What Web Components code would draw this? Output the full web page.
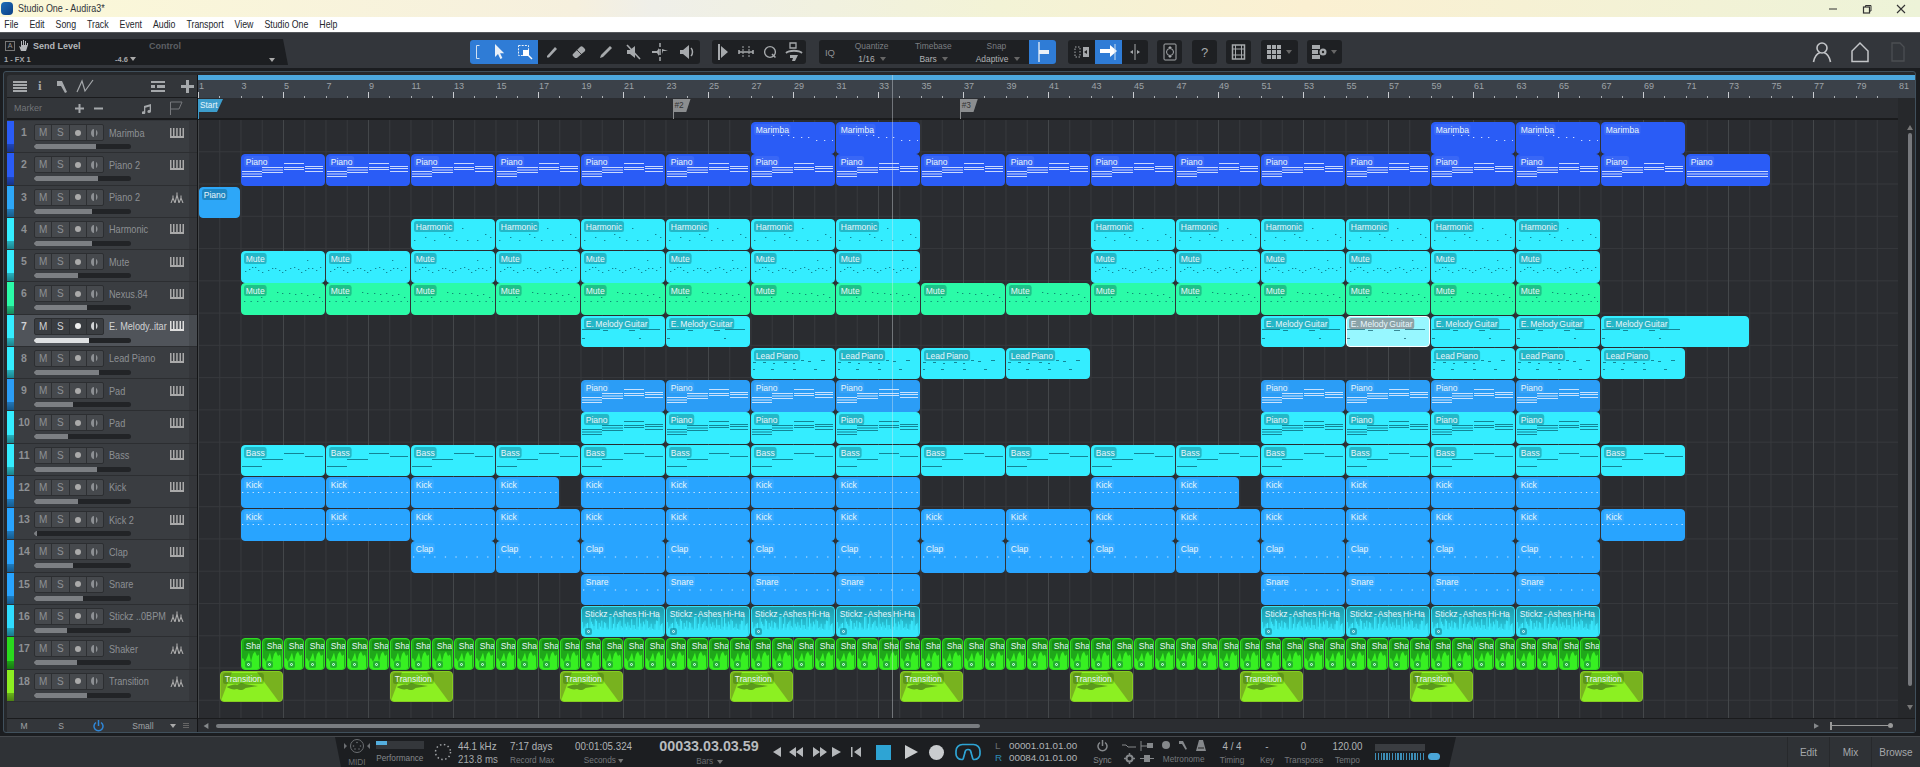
<!DOCTYPE html>
<html lang="en">
<head>
<meta charset="utf-8">
<title>Studio One - Audira3*</title>
<style>
  html, body { margin: 0; background: #2b2e33; overflow: hidden; }
  body { font-family: "Liberation Sans", Arial, sans-serif; }
</style>
</head>
<body>
<s1-window></s1-window>
<script>
// iconos de la interfaz, todos en svg con currentColor
const ic = (w, h, body, extra = "") => `<svg width="${w}" height="${h}" viewBox="0 0 ${w} ${h}" fill="currentColor" ${extra} style="display:block">${body}</svg>`;
const ICONOS = {
  arrow: ic(14, 18, `<path d="M3 1v13l3-3 2.4 5 2-1-2.3-4.8h4.1z"/>`),
  select: ic(16, 16, `<rect x="1.500" y="1.500" width="10" height="10" fill="none" stroke="currentColor" stroke-dasharray="2 1.200"/><rect x="6" y="6" width="6" height="6" fill="#fff"/><path d="M11 11l4 4" stroke="#fff" stroke-width="1.400"/>`),
  pencil: ic(16, 16, `<path d="M3 12L11 3l2 2-8 8.500H3z"/>`),
  eraser: ic(16, 16, `<path d="M2 10l7-7c1-1 2-1 3 0l1.500 1.500c1 1 1 2 0 3l-7 6c-1 .8-2 .8-3 0L2 12c-.6-.6-.6-1.400 0-2z"/><path d="M6 6l5 5" stroke="#222" stroke-width=".8"/>`),
  line: ic(16, 16, `<path d="M2 14l1-3 9-9 2 2-9 9z"/>`),
  mute: ic(16, 16, `<path d="M2 6h3l5-4v12l-5-4H2z"/><path d="M2 1l13 14" stroke="currentColor" stroke-width="1.600"/>`),
  split: ic(16, 18, `<path d="M8 0v4M8 14v4M8 6v6" stroke="currentColor" stroke-width="1.500"/><path d="M0 8h5l2-3v8l-2-3H0zM16 8h-5l-1 3V6z"/>`),
  speaker: ic(16, 16, `<path d="M1 6h3l6-5v14l-6-5H1z"/><path d="M12 4c2 2 2 6 0 8" fill="none" stroke="currentColor" stroke-width="1.500"/>`),
  fwdBar: ic(12, 18, `<path d="M1 1h2v16H1zM4 3l7 6-7 6z"/>`),
  bend: ic(16, 14, `<path d="M5 1v12M11 1v12" stroke="currentColor" stroke-dasharray="2 1"/><path d="M1 7h14M1 5v4M15 5v4" stroke="currentColor" stroke-width="1.600" fill="none"/>`),
  q: ic(14, 14, `<circle cx="7" cy="7" r="5.400" fill="none" stroke="currentColor" stroke-width="1.400"/><path d="M9 9l3.500 3.500" stroke="currentColor" stroke-width="1.500"/>`),
  stamp: ic(18, 20, `<path d="M5 1h6v5H5z" fill="none" stroke="currentColor" stroke-width="1.300"/><path d="M1 11c3-3 13-3 16 0" fill="none" stroke="currentColor" stroke-width="1.800"/><path d="M5 13h8l-3 6H7l1-3H5z"/>`),
  magnet: ic(14, 22, `<path d="M3 1v20" stroke="currentColor" stroke-width="1.300"/><rect x="3" y="9" width="10" height="4"/>`),
  boxLeft: ic(16, 12, `<rect x="9" y="1" width="6" height="10"/><path d="M1 1h5v10H1z" fill="none" stroke="currentColor" stroke-dasharray="1.500 1.500"/><path d="M13 4l-3 2 3 2z" fill="#222"/>`),
  arrowRight: ic(18, 18, `<path d="M0 6h10V2l7 6-7 6v-4H0z" fill="#fff"/><path d="M15 1v16" stroke="#cde" />`),
  center: ic(10, 18, `<path d="M5 1v16" stroke="currentColor"/><path d="M0 9l3-2v4zM10 9l-3-2v4z"/>`),
  nudge: ic(14, 18, `<rect x="1" y="1" width="12" height="16" rx="1" fill="none" stroke="currentColor"/><circle cx="7" cy="9" r="3.500" fill="none" stroke="currentColor"/><path d="M7 3l2 2H5zM7 15l2-2H5z"/>`),
  film: ic(15, 16, `<rect x="1.500" y="1" width="12" height="14" fill="none" stroke="currentColor" stroke-width="1.500"/><path d="M1 5h13M1 11h13M4.500 1v14M10.500 1v14" stroke="currentColor"/>`),
  grid: ic(16, 16, `<path d="M1 1h4v4H1zM6 1h4v4H6zM11 1h4v4h-4zM1 6h4v4H1zM6 6h4v4H6zM11 6h4v4h-4zM1 11h4v4H1zM6 11h4v4H6zM11 11h4v4h-4z"/>`),
  panels: ic(17, 16, `<path d="M1 1h8v4H1zM1 6h6v4H1zM1 11h8v4H1z"/><circle cx="12" cy="8" r="3.500"/><circle cx="12" cy="8" r="1.200" fill="#222"/>`),
  user: ic(20, 22, `<circle cx="10" cy="7" r="5" fill="none" stroke="currentColor" stroke-width="1.600"/><path d="M1.500 21c1-6 4-8.500 6.500-9.500M18.500 21c-1-6-4-8.500-6.500-9.500" fill="none" stroke="currentColor" stroke-width="1.600"/>`),
  home: ic(18, 22, `<path d="M1 20.500V10l8-8 8 8v10.500z" fill="none" stroke="currentColor" stroke-width="1.500"/>`),
  doc: ic(14, 20, `<path d="M1 1h8l4 4v14H1z" fill="none" stroke="currentColor" stroke-width="1.300"/>`),
  menuLines: ic(14, 11, `<path d="M0 0h14v2H0zM0 3h14v2H0zM0 6h14v2H0zM0 9h14v2H0z"/>`),
  wrench: ic(12, 13, `<path d="M1 1h5l5 11-2 1-4-7H1z"/>`),
  curve: ic(18, 14, `<path d="M1 13L6 2l3 10 8-11" fill="none" stroke="currentColor" stroke-width="1.200"/>`),
  listPlus: ic(14, 11, `<path d="M0 0h14v2H0zM0 4h4v3H0zM6 4h8v3H6zM0 9h14v2H0z"/>`),
  plus: ic(13, 13, `<path d="M5 0h3v5h5v3H8v5H5V8H0V5h5z"/>`),
  plusSm: ic(9, 9, `<path d="M3.500 0h2v3.500H9v2H5.500V9h-2V5.500H0v-2h3.500z"/>`),
  minusSm: ic(9, 9, `<path d="M0 3.500h9v2H0z"/>`),
  note: ic(10, 11, `<path d="M2 3l7-2v7.500a1.800 1.500 0 1 1-1.300-1.400V3.500L3.300 4.700v5a1.800 1.500 0 1 1-1.300-1.400z"/>`),
  flag: ic(14, 14, `<path d="M1.500 14V1h11.500l-3 7H1.500" fill="none" stroke="currentColor"/>`),
  hand: ic(10, 12, `<path d="M1 6l2 5h5l2-6V3H9v2H8V1H7v4H6V0H5v5H4V1H3v6z"/>`),
  piano: ic(14, 10, `<path d="M0 8h14v2H0zM0 0h1.500v8H0zM3 0h1.500v8H3zM6.200 0h1.500v8H6.200zM9.500 0H11v8H9.500zM12.500 0H14v8h-1.500z"/>`),
  wave: ic(14, 11, `<path d="M1 11l2-5 2 5M5 11l2-8 2 8M9 11l2-5 2 5M3 6V3.500M7 3V.5M11 6V3.500" fill="none" stroke="currentColor" stroke-width="1.100"/>`),
  power: ic(11, 12, `<path d="M3 2.500a4.500 4.500 0 1 0 5 0" fill="none" stroke="currentColor" stroke-width="1.500"/><path d="M5.500 0v6" stroke="currentColor" stroke-width="1.500"/>`),
  midi: ic(32, 16, `<circle cx="16" cy="8" r="6.500" fill="none" stroke="currentColor"/><circle cx="16" cy="4.500" r=".8"/><circle cx="12.500" cy="8" r=".8"/><circle cx="19.500" cy="8" r=".8"/><circle cx="14" cy="11" r=".8"/><circle cx="18" cy="11" r=".8"/><path d="M3 5l3 3-3 3zM29 5l-3 3 3 3z"/>`),
  ring: ic(18, 18, `<circle cx="9" cy="9" r="7.500" fill="none" stroke="currentColor" stroke-width="1.500" stroke-dasharray="1.500 2.500"/>`),
  loop: ic(26, 18, `<path d="M8 16.500H6.500a5.500 5.500 0 0 1-5.500-5.500V8a6.500 6.500 0 0 1 6.500-6.500h11A6.500 6.500 0 0 1 25 8v3a5.500 5.500 0 0 1-5.500 5.500H18" fill="none" stroke="currentColor" stroke-width="1.700"/><path d="M8 16.500l2-7a3 3 0 0 1 6 0l2 7" fill="none" stroke="currentColor" stroke-width="1.700"/>`),
  tStart: ic(10, 10, `<path d="M9 0v10L1 5z"/>`),
  tRew: ic(14, 10, `<path d="M7 0v10L0 5zM14 0v10L7 5z"/>`),
  tFwd: ic(14, 10, `<path d="M0 0v10l7-5zM7 0v10l7-5z"/>`),
  tEnd: ic(9, 10, `<path d="M0 0v10l9-5z"/>`),
  tZero: ic(10, 10, `<path d="M0 0h1.500v10H0zM10 0v10L3 5z"/>`),
  metroA: ic(14, 10, `<path d="M0 4h4l2 2h8" fill="none" stroke="currentColor"/>`),
  metroB: ic(14, 10, `<path d="M1 0v10M1 5h6" stroke="currentColor"/><rect x="7" y="2" width="6" height="5"/>`),
  metroC: ic(10, 10, `<circle cx="5" cy="5" r="4"/>`),
  metroD: ic(10, 10, `<path d="M1 1h4l4 8-1.500.8L4 4H1z"/>`),
  metroE: ic(12, 11, `<path d="M4 0h4l3 11H1z"/><path d="M3 8h6" stroke="#222"/>`),
  gear: ic(11, 11, `<circle cx="5.500" cy="5.500" r="3" fill="none" stroke="currentColor" stroke-width="2"/><path d="M5.500 0v2M5.500 9v2M0 5.500h2M9 5.500h2" stroke="currentColor" stroke-width="1.500"/>`),
  clickBar: ic(14, 9, `<path d="M0 4.500h14" stroke="currentColor"/><rect x="4" y="1" width="6" height="7"/>`)
};

// ventana completa
class S1Window extends HTMLElement {
  connectedCallback() {
    this.attachShadow({ mode: "open" });
    this.shadowRoot.innerHTML = `
      <style>
        :host { display: flex; flex-direction: column; width: 1920px; height: 767px; overflow: hidden; }
      </style>
      <s1-titlebar></s1-titlebar>
      <s1-menubar></s1-menubar>
      <s1-toolbar></s1-toolbar>
      <s1-arranger></s1-arranger>
      <s1-transport></s1-transport>`;
  }
}

class S1Titlebar extends HTMLElement {
  connectedCallback() {
    this.attachShadow({ mode: "open" });
    this.shadowRoot.innerHTML = `
      <style>
        :host { display: flex; align-items: center; height: 17px; padding: 0 0 0 1px; font-size: 10.300px; color: #30343a;
          background: linear-gradient(90deg, #fbf8d8 0, #f6f0de 30%, #efefe9 34%, #f3f3d6 52%, #fbf0d2 68%, #edf3d8 100%); }
        .logo { width: 12px; height: 13px; border-radius: 4px; background: linear-gradient(135deg, #1d6fb8, #0d3f86); margin-right: 5px; }
        .t { transform: scaleX(.87); transform-origin: left; }
        .sp { flex: 1; }
        .b { width: 34px; display: flex; justify-content: center; color: #333; }
      </style>
      <div class="logo"></div><span class="t">Studio One - Audira3*</span><span class="sp"></span>
      <div class="b">${ic(10, 10, `<path d="M1 5h8" stroke="currentColor"/>`)}</div>
      <div class="b">${ic(10, 10, `<rect x="1.500" y="3" width="6" height="6" fill="none" stroke="currentColor" stroke-width="1.200"/><path d="M3.500 3V1.500h5.500V7H7.500" fill="none" stroke="currentColor"/>`)}</div>
      <div class="b" style="margin-right:2px">${ic(10, 10, `<path d="M1 1l8 8M9 1l-8 8" stroke="currentColor" stroke-width="1.100"/>`)}</div>`;
  }
}

class S1Menubar extends HTMLElement {
  connectedCallback() {
    this.attachShadow({ mode: "open" });
    const items = ["File", "Edit", "Song", "Track", "Event", "Audio", "Transport", "View", "Studio One", "Help"];
    this.shadowRoot.innerHTML = `
      <style>
        :host { display: block; height: 15px; background: #fff; color: #22262b; font-size: 10.200px; }
        div { display: flex; align-items: center; gap: 12.800px; height: 15px; padding-left: 5px; transform: scaleX(.86); transform-origin: left; }
      </style>
      <div>${items.map((t) => `<span>${t}</span>`).join("")}</div>`;
  }
}

class S1Toolbar extends HTMLElement {
  connectedCallback() {
    this.attachShadow({ mode: "open" });
    const cel = (n, w = 27, cls = "") => `<span class="c ${cls}" style="width:${w}px">${ICONOS[n]}</span>`;
    const sel = (a, b, w) => `<div class="sel" style="width:${w}px"><span class="sq">${a}</span><b><span class="sq">${b}</span><i></i></b></div>`;
    this.shadowRoot.innerHTML = `
      <style>
        :host { display: flex; align-items: flex-start; height: 36px; padding-top: 6px; box-sizing: border-box;
          background: #33363b; color: #a9acaf; font-size: 9px; border-top: 1px solid #55585c; }
        .auto { width: 288px; height: 26px; background: #1c1e21; clip-path: polygon(0 0, 283px 0, 288px 100%, 0 100%);
          display: grid; grid-template-columns: 115px 145px 1fr; grid-template-rows: 14px 12px; align-items: center; color: #8f9296; }
        .auto .t { display: flex; align-items: center; gap: 3px; padding-left: 5px; font-weight: bold; font-size: 9px; color: #b5b7ba; }
        .a { border: 1px solid #777; width: 8px; height: 8px; font-size: 7px; font-weight: normal; line-height: 8px; text-align: center; color: #999; }
        .auto .ctl { font-weight: bold; font-size: 9px; color: #5d6064; padding-left: 34px; }
        .auto .s { padding-left: 4px; font-size: 7.500px; font-weight: bold; color: #a5a7aa; }
        .auto .v { padding-left: 0; font-size: 7.500px; font-weight: bold; color: #a5a7aa; display: flex; gap: 2px; align-items: center; }
        i.d { width: 0; height: 0; border: 3px solid transparent; border-top: 4px solid #aaa; border-bottom: 0; display: inline-block; }
        .g { display: flex; align-items: center; height: 24px; background: #1e2023; border-radius: 3px; margin-top: 1px; flex: none; overflow: hidden; color: #a6a9ac; }
        .c { display: flex; align-items: center; justify-content: center; height: 24px; flex: none; }
        .on { background: #2f7cd6; color: #e9f0f8; }
        .sel { display: flex; flex-direction: column; align-items: center; font-size: 9.800px; color: #7b7e82; gap: 2px; }
        .sel b { font-weight: normal; color: #b0b2b5; display: flex; align-items: center; gap: 3px; }
        .sel i { width: 0; height: 0; border: 3px solid transparent; border-top: 4px solid #666; border-bottom: 0; }
        .sq { display: inline-block; transform: scaleX(.86); }
        .sp { flex: 1; }
        .r { display: flex; align-items: center; justify-content: center; width: 38px; height: 26px; color: #c3c5c8; }
      </style>
      <div class="auto">
        <div class="t"><span class="a">A</span>${ICONOS.hand}<span style="margin-left:2px">Send Level</span></div>
        <div class="ctl" style="grid-column: 2 / 4">Control</div>
        <div class="s">1 - FX 1</div>
        <div class="v">-4.6 <i class="d"></i></div>
        <div style="text-align:right;padding-right:13px"><i class="d" style="border-width:4px 3px 0"></i></div>
      </div>
      <div class="g" style="margin-left:182px;width:230px">
        <div style="display:flex;width:68px;height:24px" class="on">
          <span class="c" style="width:16px"><svg width="4" height="14"><path d="M3.500 .5H.5v13h3" fill="none" stroke="#cfe0f2"/></svg></span>
          ${cel("arrow", 25)}${cel("select", 27)}
        </div>
        ${cel("pencil")}${cel("eraser")}${cel("line")}${cel("mute")}${cel("split")}${cel("speaker", 27)}
      </div>
      <div class="g" style="margin-left:12px;width:94px;padding-left:0">
        <span class="c" style="width:22px">${ICONOS.fwdBar}</span>${cel("bend", 24)}${cel("q", 24)}${cel("stamp", 24)}
      </div>
      <div class="g" style="margin-left:13px;width:237px">
        <span class="c" style="width:22px;font-size:9.500px;color:#8e9195">IQ</span>
        ${sel("Quantize", "1/16", 61)}${sel("Timebase", "Bars", 62)}${sel("Snap", "Adaptive", 65)}
        ${cel("magnet", 27, "on")}
      </div>
      <div class="g" style="margin-left:12px;width:80px">${cel("boxLeft")}${cel("arrowRight", 27, "on")}${cel("center", 26)}</div>
      <div class="g" style="margin-left:9px;width:25px">${cel("nudge", 25)}</div>
      <div class="g" style="margin-left:10px;width:25px;font-size:13px"><span class="c" style="width:25px">?</span></div>
      <div class="g" style="margin-left:9px;width:25px">${cel("film", 25)}</div>
      <div class="g" style="margin-left:10px;width:37px">${cel("grid", 25)}<i class="d" style="border-top-color:#666"></i></div>
      <div class="g" style="margin-left:9px;width:35px">${cel("panels", 24)}<i class="d" style="border-top-color:#666"></i></div>
      <span class="sp"></span>
      <div class="r">${ICONOS.user}</div>
      <div class="r">${ICONOS.home}</div>
      <div class="r" style="color:#4c4f53;margin-right:3px">${ICONOS.doc}</div>`;
  }
}

// datos de las pistas
const AZUL = "#2a5cf6", CELESTE = "#2da7f8", CIAN = "#34edff", MENTA = "#2bfba8", MEDIO = "#2b9df6", KICK = "#28a4ff", VERDE = "#2ad91e", LIMA = "#8cee22";
const seguidos = (a, b, paso) => { const r = []; for (let i = a; i < b; i += paso) r.push([i, i + paso]); return r; };
const PISTAS = [
  { n: "Marimba", c: AZUL, f: 64, i: "piano", l: "Marimba", p: "marimba", k: [...seguidos(27, 35, 4), ...seguidos(59, 67, 4), [67, 71, "vacio"]] },
  { n: "Piano 2", c: AZUL, f: 66, i: "piano", l: "Piano", p: "pianoL", k: [...seguidos(3, 71, 4), [71, 75, "plano"]] },
  { n: "Piano 2", c: CELESTE, f: 60, i: "wave", l: "Piano", p: "vacio", k: [[1, 3]] },
  { n: "Harmonic", c: CIAN, f: 60, i: "piano", l: "Harmonic", p: "harmonic", k: [...seguidos(11, 35, 4), ...seguidos(43, 67, 4)] },
  { n: "Mute", c: CIAN, f: 45, i: "piano", l: "Mute", p: "mute", k: [...seguidos(3, 35, 4), ...seguidos(43, 67, 4)] },
  { n: "Nexus.84", c: MENTA, f: 55, i: "piano", l: "Mute", p: "nexus", k: seguidos(3, 67, 4) },
  { n: "E. Melody..itar", c: CIAN, f: 57, i: "piano", l: "E. Melody Guitar", p: "melody", k: [[19, 23], [23, 27], [51, 55], [55, 59, null, true], [59, 63], [63, 67], [67, 74]] },
  { n: "Lead Piano", c: CIAN, f: 67, i: "piano", l: "Lead Piano", p: "lead", k: [...seguidos(27, 43, 4), ...seguidos(59, 71, 4)] },
  { n: "Pad", c: MEDIO, f: 40, i: "piano", l: "Piano", p: "pianoL", k: [...seguidos(19, 35, 4), ...seguidos(51, 67, 4)] },
  { n: "Pad", c: CIAN, f: 35, i: "piano", l: "Piano", p: "pianoD", k: [...seguidos(19, 35, 4), ...seguidos(51, 67, 4)] },
  { n: "Bass", c: CIAN, f: 65, i: "piano", l: "Bass", p: "bass", k: seguidos(3, 71, 4) },
  { n: "Kick", c: KICK, f: 45, i: "piano", l: "Kick", p: "kick", k: [[3, 7], [7, 11], [11, 15], [15, 18], ...seguidos(19, 35, 4), [43, 47], [47, 50], ...seguidos(51, 67, 4)] },
  { n: "Kick 2", c: KICK, f: 3, i: "piano", l: "Kick", p: "kick", k: seguidos(3, 71, 4) },
  { n: "Clap", c: KICK, f: 40, i: "piano", l: "Clap", p: "clap", k: seguidos(11, 67, 4) },
  { n: "Snare", c: KICK, f: 51, i: "piano", l: "Snare", p: "clap", k: [...seguidos(19, 35, 4), ...seguidos(51, 67, 4)] },
  { n: "Stickz ..0BPM", c: "#2fdcff", f: 34, i: "wave", l: "Stickz - Ashes Hi-Ha", t: "audio", k: [...seguidos(19, 35, 4), ...seguidos(51, 67, 4)] },
  { n: "Shaker", c: VERDE, f: 44, i: "wave", l: "Sha", t: "shaker", k: seguidos(3, 67, 1) },
  { n: "Transition", c: LIMA, f: 55, i: "wave", l: "Transition", t: "trans", k: [2, 10, 18, 26, 34, 42, 50, 58, 66].map((b) => [b, b + 3]) }
];

const dots = (xs, y) => xs.map((x) => [x, y, 1.300]);
const rango = (a, b, p) => { const r = []; for (let x = a; x < b; x += p) r.push(x); return r; };
const PATRONES = {
  vacio: [],
  marimba: [[22, 13], [30, 13], [37, 13], [42, 15], [50, 15], [57, 15], [65, 18], [73, 18], [81, 18]].map(([x, y]) => [x, y, 1.300]),
  harmonic: [[51, 9], [14, 18], [23, 21], [33, 15], [38, 18], [45, 21], [56, 21], [66, 21], [74, 15], [79, 18], [3, 21]].map(([x, y]) => [x, y, 1.400]),
  mute: [[66, 9], [4, 20], [8, 18], [11, 16], [14, 16], [17, 19], [21, 21], [27, 19], [31, 17], [34, 17], [38, 19], [41, 21], [44, 19], [49, 17], [53, 16], [57, 18], [60, 21], [64, 19], [67, 17], [71, 17], [75, 19], [79, 16], [82, 19]].map(([x, y]) => [x, y, 1.300]),
  nexus: [...dots(rango(3, 84, 6.500), 18), ...[[36, 9], [41, 10], [48, 10], [54, 11], [60, 10], [66, 12], [72, 11], [78, 14], [82, 13], [20, 14]].map(([x, y]) => [x, y, 1.300])],
  melody: [[1, 13, 18], [22, 14, 5], [48, 14, 6], [59, 13, 20], [1, 22, 3], [58, 22, 2]],
  lead: [[2, 14, 3], [12, 14, 3], [22, 15, 2], [33, 14, 3], [42, 15, 2], [50, 12, 3], [57, 13, 3], [70, 12, 4], [2, 21, 2], [20, 21, 3], [42, 21, 3], [63, 21, 3]],
  pianoL: [[0, 17, 21], [0, 19.500, 21], [0, 22, 21], [21, 13, 21], [21, 15.500, 21], [21, 18, 21], [43, 9, 20], [43, 13, 20], [43, 15, 20], [64, 12, 21], [64, 14, 21], [64, 17, 21]],
  bass: [[43, 8, 20], [64, 11, 21], [21, 14, 21], [0, 21, 21]],
  kick: dots(rango(1, 85, 5.300), 15),
  clap: dots(rango(2, 85, 10.600), 15.500),
  plano: [[0, 17, 85], [0, 19.500, 85], [0, 22, 85]]
};
PATRONES.pianoD = PATRONES.pianoL;

// pequeño generador para que la forma de onda sea siempre igual
const ruido = (sem) => { let s = sem; return () => (s = (s * 9301 + 49297) % 233280) / 233280; };
const ONDA_AUDIO = (() => {
  const r = ruido(7); let d = "";
  for (let x = 0; x < 85; x += 1.300) { const alto = 6 + r() * 14; d += `M${x.toFixed(1)} 30V${(30 - alto).toFixed(1)}`; }
  return d;
})();
const LLAMA = (() => {
  const r = ruido(13); let d = "M0 31";
  for (let x = 0; x <= 21; x += 2) d += `L${x} ${(13 + r() * 12).toFixed(1)}`;
  return d + "L21 31Z";
})();

class S1Clip extends HTMLElement {
  connectedCallback() {
    this.attachShadow({ mode: "open" });
    const label = this.getAttribute("label");
    const color = this.getAttribute("color");
    const tipo = this.getAttribute("tipo") || "midi";
    const pat = this.getAttribute("patron");
    const sel = this.hasAttribute("selected");
    const claro = ["pianoL", "marimba", "kick", "clap", "plano"].includes(pat);
    const tinta = claro ? "rgba(232,240,255,.85)" : "rgba(0,70,85,.62)";
    let dentro = "";
    if (tipo === "midi") {
      dentro = `<svg class="fondo" width="100%" height="32">${(PATRONES[pat] || []).map(([x, y, w]) => `<rect x="${x}" y="${y}" width="${w}" height="1" fill="${tinta}"/>`).join("")}</svg>`;
    } else if (tipo === "audio") {
      dentro = `<svg class="fondo" width="100%" height="32"><path d="${ONDA_AUDIO}" stroke="#3deaff" fill="none"/><rect y="24" width="100%" height="8" fill="#36e6fb"/></svg><span class="o"></span>`;
    } else if (tipo === "shaker") {
      dentro = `<svg class="fondo" width="100%" height="32"><path d="${LLAMA}" fill="#37f022"/></svg><span class="o"></span>`;
    } else {
      dentro = `<svg class="fondo" width="100%" height="32" viewBox="0 0 64 32" preserveAspectRatio="none"><path d="M0 32L13 0H38L63 32Z" fill="#8cf022"/><path d="M7 16c5-2 8-3 11-2 3-2 6-2 8-1l14 2-13 2c-2 2-6 3-9 1-4 1-7 0-11-2z" fill="#5c9a1c"/></svg>`;
    }
    const fondo = tipo === "audio" ? "linear-gradient(#1e99aa, #25b3c6 45%, #31dcf2)"
      : tipo === "shaker" ? "#1fa81a" : tipo === "trans" ? "#78b21f" : sel ? "#97f7ff" : color;
    const borde = sel ? "#fff" : tipo === "audio" ? "#35dff5" : tipo === "shaker" ? "#2fdd22" : tipo === "trans" ? "#86cc22" : color;
    const chip = sel ? "#8ba3a8" : claro || color === AZUL ? "rgba(255,255,255,.07)" : tipo === "midi" ? "rgba(0,60,70,.3)" : tipo === "audio" ? "transparent" : "rgba(0,50,0,.22)";
    this.shadowRoot.innerHTML = `
      <style>
        :host { display: block; position: relative; margin: 1px .5px 0; min-width: 0; box-sizing: border-box; height: 31.500px;
          border: 1px solid ${borde}; border-radius: 4px; background: ${fondo}; overflow: hidden; }
        .fondo { position: absolute; left: -1px; top: -1px; }
        .l { position: relative; display: inline-block; margin: 1px 0 0 ${tipo === "audio" ? 1 : 2}px; padding: 0 2px; height: 11px; line-height: 11px; vertical-align: top;
          background: ${chip}; border-radius: 2.500px; color: #e9f6fb; font-size: 9.800px; word-spacing: -1px; white-space: nowrap; box-sizing: border-box;
          transform: scaleX(.87); transform-origin: left; }
        .o { position: absolute; left: 3px; bottom: 1px; width: 7px; height: 7px; border-radius: 2px; background: rgba(0,60,70,.35); }
        .o::after { content: ""; position: absolute; left: 2px; top: 2px; width: 3px; height: 3px; border-radius: 50%; border: .6px solid #dff; box-sizing: border-box; }
      </style>
      ${dentro}<span class="l">${label}</span>`;
  }
}

class S1TrackHead extends HTMLElement {
  connectedCallback() {
    this.attachShadow({ mode: "open" });
    const num = this.getAttribute("num");
    const nombre = this.getAttribute("nombre");
    const color = this.getAttribute("color");
    const fader = this.getAttribute("fader");
    const icono = ICONOS[this.getAttribute("icono")];
    const sel = this.hasAttribute("selected");
    this.shadowRoot.innerHTML = `
      <style>
        :host { display: grid; grid-template-columns: 7px 20px 1fr 8px; height: 32.280px; box-sizing: border-box;
          background: ${sel ? "#50545a" : "#3a3d41"}; border-bottom: 1px solid #2c2e31; color: ${sel ? "#d0d2d4" : "#8d9094"}; font-size: 10px; }
        .st { background: ${color}; position: relative; display: flex; flex-direction: column; justify-content: flex-end; }
        .st i { height: 8px; background: linear-gradient(rgba(0,0,0,.25), rgba(0,0,0,.45)); }
        .n { text-align: center; font-weight: bold; font-size: 10.500px; line-height: 23px; }
        .m { display: flex; flex-direction: column; padding-top: 3px; min-width: 0; }
        .top { display: flex; align-items: center; height: 17px; }
        .bt { display: flex; width: 70px; height: 17px; flex: none; border: 1px solid #2c2e31; border-radius: 2px; box-sizing: border-box; background: ${sel ? "#3a3d41" : "#46494d"}; }
        .bt span { flex: 1; display: flex; align-items: center; justify-content: center; border-right: 1px solid #2e3033; font-size: 10px; }
        .bt span:last-child { border: 0; }
        .dot { width: 6px; height: 6px; border-radius: 50%; background: ${sel ? "#eee" : "#aaa"}; }
        .nm { width: 61px; margin-left: 5px; white-space: nowrap; font-size: 10.500px; flex: none; transform: scaleX(.87); transform-origin: left; }
        .ic { margin-left: 0; width: 14px; color: ${sel ? "#ddd" : "#aaa"}; }
        .f { width: 97px; height: 5px; margin-top: 3px; background: #222427; border-radius: 3px; overflow: hidden; }
        .f div { height: 5px; width: ${fader}%; background: ${sel ? "#dfe1e3" : "#7c7f83"}; border-radius: 3px 0 0 3px; }
        .ed { background: rgba(0,0,0,.1); }
      </style>
      <div class="st"><i></i></div>
      <div class="n">${num}</div>
      <div class="m">
        <div class="top">
          <div class="bt"><span>M</span><span>S</span><span><i class="dot"></i></span><span>${ic(7, 8, `<path d="M3 0v8C1 8 0 6 0 4s1-4 3-4z"/><path d="M5 1c2 1 2 5 0 6z"/>`)}</span></div>
          <div class="nm">${nombre}</div>
          <div class="ic">${icono}</div>
        </div>
        <div class="f"><div></div></div>
      </div>
      <div class="ed"></div>`;
  }
}

class S1Ruler extends HTMLElement {
  connectedCallback() {
    this.attachShadow({ mode: "open" });
    let html = "";
    for (let b = 1; b <= 81; b += 2) html += `<span class="nr">${b}</span>`;
    let t = "";
    for (let b = 1; b <= 80; b++) t += `<i class="${(b - 1) % 4 === 0 ? "alto" : ""}"></i>`;
    this.shadowRoot.innerHTML = `
      <style>
        :host { display: block; height: 23px; box-sizing: border-box; background: #3b4149; color: #9ea3a8; font-size: 9px; overflow: hidden; }
        .franja { height: 5px; background: #4ca8de; }
        .nums { display: grid; grid-template-columns: repeat(41, 42.500px); height: 12px; line-height: 13px; }
        .nr { text-align: left; padding-left: 1px; }
        .ticks { display: grid; grid-template-columns: repeat(80, 21.250px); height: 6px; align-items: end; }
        .ticks i { display: block; height: 2px; width: 1px; background: #aeb2b6; }
        .ticks i.alto { height: 6px; background: #c9ccd0; }
      </style>
      <div class="franja"></div>
      <div class="nums">${html}</div>
      <div class="ticks">${t}</div>`;
  }
}

class S1Flag extends HTMLElement {
  connectedCallback() {
    this.attachShadow({ mode: "open" });
    const color = this.getAttribute("color");
    const ancho = this.getAttribute("ancho") || 17;
    this.shadowRoot.innerHTML = `
      <style>
        :host { display: block; width: ${ancho}px; height: 20px; border-left: 1px solid ${color}; margin-top: 1px; }
        div { width: ${ancho}px; height: 13px; background: ${color}; clip-path: polygon(0 0, 100% 0, 75% 100%, 0 100%); color: ${this.getAttribute("tinta")}; font-size: 8.300px; line-height: 12px; padding-left: 1px; box-sizing: border-box; white-space: nowrap; }
      </style>
      <div><slot></slot></div>`;
  }
}

class S1Arranger extends HTMLElement {
  connectedCallback() {
    this.attachShadow({ mode: "open" });
    const cabezas = PISTAS.map((p, i) => `<s1-track-head num="${i + 1}" nombre="${p.n}" color="${p.c}" fader="${p.f}" icono="${p.i}" ${i === 6 ? "selected" : ""}></s1-track-head>`).join("");
    const clips = PISTAS.map((p, i) => p.k.map(([a, b, over, sel]) =>
      `<s1-clip style="grid-row:${i + 1};grid-column:${a}/${b}" label="${p.l}" color="${p.c}" tipo="${p.t || "midi"}" patron="${over || p.p || ""}" ${sel ? "selected" : ""}></s1-clip>`
    ).join("")).join("");
    this.shadowRoot.innerHTML = `
      <style>
        :host { display: block; height: 668px; box-sizing: border-box; background: #1b1d20; padding-top: 3px; }
        .panel { height: 662px; margin: 0 4px 0 3px; box-sizing: border-box; border: 1px solid #40505c; border-radius: 3px; background: #26282b; padding-top: 3px;
          display: grid; grid-template-columns: 194px 1fr; grid-template-rows: 23px 22px 598px 1fr; }
        .hd, .mk, .heads, .pie { margin-left: 3px; background: #33363a; color: #8d9094; border-right: 1px solid #141517; }
        .hd { display: flex; align-items: center; gap: 8px; padding: 0 3px 0 6px; color: #a5a8ab; border-bottom: 1px solid #1a1b1d; border-top-left-radius: 3px; box-sizing: border-box; }
        .mk { display: flex; align-items: center; padding-left: 7px; font-size: 9px; color: #727579; border-bottom: 2px solid #1a1b1d; box-sizing: border-box; }
        .mk .sv { margin-left: 0; color: #a5a8ab; }
        .heads { overflow: hidden; background: #33363a; border-right-color: #141517; }
        .tl { position: relative; grid-column: 2; grid-row: 1 / 4; display: grid; grid-template-rows: 23px 22px 598px; }
        .marks { display: grid; grid-template-columns: repeat(80, 21.250px); height: 22px; border-bottom: 2px solid #1a1b1d; box-sizing: border-box; background: #2b2d31; width: 1700px; }
        .cuerpo { display: flex; }
        .lanes { width: 1700px; height: 598px; display: grid; grid-template-columns: repeat(80, 21.250px); grid-template-rows: repeat(18, 32.280px); grid-auto-rows: 17px; overflow: hidden;
          background-color: #2a2c30;
          background-image: linear-gradient(90deg, #44474a 1px, transparent 1px), linear-gradient(90deg, #37393d 1px, transparent 1px), linear-gradient(#36383c 1px, transparent 1px);
          background-size: 85px 100%, 21.250px 100%, 100% 32.280px; background-position: 0 0, 0 0, 0 -1px; }
        .gut { flex: 1; background: #26282b; display: flex; flex-direction: column; align-items: center; padding: 5px 0 0 6px; box-sizing: border-box; color: #6a6d70; }
        .thumb { width: 4px; height: 553px; margin-top: 3px; background: #77797d; border-radius: 2px; }
        .up, .dn { width: 0; height: 0; border: 3px solid transparent; }
        .up { border-bottom: 5px solid #777; border-top: 0; } .dn { border-top: 5px solid #777; border-bottom: 0; margin-top: 19px; }
        .ph { position: absolute; left: 694px; top: 0; bottom: 0; width: 1px; background: rgba(230,235,240,.38); }
        .pie { display: grid; grid-template-columns: 34px 40px 34px 56px 4px 1fr; align-items: center; justify-items: center; font-size: 8.500px; color: #a0a3a6; border-top: 1px solid #1a1b1d; border-right-color: #141517; }
        .barra { background: #2b2d31; border-top: 1px solid #1a1b1d; display: flex; align-items: center; padding-left: 5px; color: #85888b; }
        .bolsa { width: 764px; height: 4px; margin-left: 7px; background: #797c80; border-radius: 2px; }
        .sp { flex: 1; }
        .zoom { display: flex; align-items: center; width: 65px; margin: 0 22px 0 9px; color: #888; }
        .zoom i { flex: 1; height: 1px; background: #999; }
        .zoom b { width: 2px; height: 8px; background: #999; margin-left: 6px; }
        .zoom u { width: 5px; height: 5px; background: #999; border-radius: 50%; }
      </style>
      <div class="panel">
        <div class="hd">
          ${ICONOS.menuLines}
          <span style="font:bold 13px 'Liberation Serif',serif;margin:0 6px 0 3px">i</span>
          ${ICONOS.wrench}${ICONOS.curve}
          <span style="flex:1"></span>${ICONOS.listPlus}<span style="width:0"></span>${ICONOS.plus}
        </div>
        <div class="mk" style="grid-row:2;grid-column:1">
          <span style="width:61px">Marker</span>
          <span class="sv" style="width:19px">${ICONOS.plusSm}</span><span class="sv" style="width:48px">${ICONOS.minusSm}</span>
          <span class="sv" style="width:27px">${ICONOS.note}</span><span class="sv" style="color:#77797d">${ICONOS.flag}</span>
        </div>
        <div class="heads" style="grid-row:3;grid-column:1;padding-top:1px;box-sizing:border-box">${cabezas}</div>
        <div class="tl">
          <s1-ruler></s1-ruler>
          <div class="marks">
            <s1-flag ancho="24" color="#3d9dcc" tinta="#e6f4fb" style="grid-column:1">Start</s1-flag>
            <s1-flag color="#8b8d8f" tinta="#333" style="grid-column:23;margin-left:7px">#2</s1-flag>
            <s1-flag color="#8b8d8f" tinta="#333" style="grid-column:36;margin-left:18px">#3</s1-flag>
          </div>
          <div class="cuerpo">
            <div class="lanes" style="padding-top:1px;box-sizing:border-box">${clips}</div>
            <div class="gut"><i class="up"></i><div class="thumb"></div><i class="dn"></i></div>
          </div>
          <div class="ph"></div>
        </div>
        <div class="pie"><span>M</span><span>S</span><span style="color:#2f86d6">${ICONOS.power}</span><span>Small</span><i style="width:0;height:0;border:3px solid transparent;border-top:4px solid #aaa;border-bottom:0"></i><span style="width:6px;height:6px;background:repeating-linear-gradient(#666 0 1px,transparent 1px 2px)"></span></div>
        <div class="barra">
          ${ICONOS.tStart.replace('width="10" height="10"', 'width="6" height="8"')}
          <div class="bolsa"></div><span class="sp"></span>
          ${ICONOS.tEnd.replace('width="9" height="10"', 'width="5" height="8"')}
          <div class="zoom"><b style="margin:0 0 0 2px"></b><i></i><u></u></div>
        </div>
      </div>`;
  }
}

class S1Readout extends HTMLElement {
  connectedCallback() {
    this.attachShadow({ mode: "open" });
    const al = this.getAttribute("align") || "center";
    this.shadowRoot.innerHTML = `
      <style>
        :host { display: flex; flex-direction: column; justify-content: center; text-align: ${al}; gap: 2px; white-space: nowrap; }
        .a, .b { transform: scaleX(.88); transform-origin: ${al}; }
        .a { font-size: 11.100px; line-height: 12px; color: #b1b4b7; }
        .b { font-size: 9.400px; line-height: 11px; color: #75787b; }
      </style>
      <div class="a">${this.getAttribute("top")}</div>
      <div class="b"><slot>${this.getAttribute("bottom") || ""}</slot></div>`;
  }
}

class S1Transport extends HTMLElement {
  connectedCallback() {
    this.attachShadow({ mode: "open" });
    const flechita = `<i style="display:inline-block;width:0;height:0;border:3px solid transparent;border-top:4px solid #777;border-bottom:0;margin-left:3px"></i>`;
    this.shadowRoot.innerHTML = `
      <style>
        :host { display: flex; height: 31px; background: #2f3236; border-top: 1px solid #45484c; box-sizing: border-box; color: #a4a7aa; font-size: 9px; }
        .izq { width: 335px; }
        .centro { width: 1121px; flex: none; box-sizing: border-box; background: #1c1e21; padding-left: 6px; clip-path: polygon(0 0, 100% 0, calc(100% - 7px) 100%, 6px 100%);
          display: grid; grid-template-columns: 31px 56px 30px 52px 65px 75px 118px 222px 95px 35px 92px 40px 30px 43px 45px 75px; align-items: center; }
        .col { display: flex; flex-direction: column; align-items: center; gap: 2px; font-size: 9.400px; color: #75787b; }
        .sq { display: inline-block; transform: scaleX(.88); }
        .perf { width: 48px; height: 8px; background: #34373b; margin-bottom: 1px; }
        .perf div { width: 22%; height: 4px; background: #54aede; }
        .time { font-size: 14.300px; font-weight: bold; color: #b8bbbe; line-height: 17px; text-align: center; }
        .bars { display: flex; flex-direction: column; align-items: center; color: #6a6d70; font-size: 9.400px; }
        .tr { display: flex; align-items: center; color: #b5b8bb; padding-left: 4px; }
        .tr .stop { width: 15px; height: 15px; background: #2ea4d4; margin: 0 14px 0 15px; }
        .tr .play { width: 0; height: 0; border-style: solid; border-width: 7px 0 7px 13px; border-color: transparent transparent transparent #c9ccce; margin-right: 11px; }
        .tr .rec { width: 15px; height: 15px; border-radius: 50%; background: #c9ccce; margin-right: 11px; }
        .lr { display: grid; grid-template-columns: 14px 1fr; font-size: 9.800px; color: #b1b4b7; line-height: 12px; padding-left: 5px; }
        .lr b { font-weight: normal; color: #6a6d70; }
        .lr b.r { color: #2f8bb5; }
        .metro { display: grid; grid-template-columns: 18px 18px 1fr; grid-template-rows: 12px 13px; align-items: center; justify-items: center; color: #85888b; }
        .met { display: flex; flex-direction: column; gap: 2px; }
        .met .v { width: 50px; height: 7px; background: #3a3d41; }
        .met .h { width: 50px; height: 7px; background: repeating-linear-gradient(90deg, #3d8fb8 0 1.500px, #1c1e21 1.500px 2.800px); }
        .der { flex: 1; display: flex; justify-content: flex-end; align-items: center; font-size: 10px; color: #a5a8ab; }
        .der span { width: 42px; height: 100%; display: flex; align-items: center; justify-content: center; border-left: 1px solid #27292c; box-sizing: border-box; }
      </style>
      <div class="izq"></div>
      <div class="centro">
        <div class="col" style="color:#6c6f72"><span style="color:#6c6f72">${ICONOS.midi}</span><span class="sq">MIDI</span></div>
        <div class="col" style="color:#85888b"><div class="perf"><div></div></div><span class="sq">Performance</span></div>
        <div class="col" style="color:#a0a3a6">${ICONOS.ring}</div>
        <s1-readout top="44.1 kHz" align="left"><span style="color:#a4a7aa;font-size:11px">213.8 ms</span></s1-readout>
        <s1-readout top="7:17 days" align="left" bottom="Record Max"></s1-readout>
        <s1-readout top="00:01:05.324" align="left"><span style="margin-left:10px">Seconds</span>${flechita}</s1-readout>
        <div class="bars"><div class="time">00033.03.03.59</div><span><span class="sq">Bars</span>${flechita}</span></div>
        <div class="tr">
          ${ICONOS.tStart}<span style="width:7px"></span>${ICONOS.tRew}<span style="width:10px"></span>${ICONOS.tFwd}<span style="width:5px"></span>${ICONOS.tEnd}<span style="width:10px"></span>${ICONOS.tZero}
          <div class="stop"></div><div class="play"></div><div class="rec"></div>
          <span style="color:#2ea4d4">${ICONOS.loop}</span>
        </div>
        <div class="lr"><b>L</b><span>00001.01.01.00</span><b class="r">R</b><span>00084.01.01.00</span></div>
        <div class="col" style="color:#85888b">${ICONOS.power}<span class="sq">Sync</span></div>
        <div class="metro">${ICONOS.metroA}${ICONOS.metroB}<span style="display:flex;gap:7px">${ICONOS.metroC}${ICONOS.metroD}${ICONOS.metroE}</span>${ICONOS.gear}${ICONOS.clickBar}<span class="sq" style="font-size:9.400px;color:#75787b">Metronome</span></div>
        <s1-readout top="4 / 4" bottom="Timing"></s1-readout>
        <s1-readout top="-" bottom="Key"></s1-readout>
        <s1-readout top="0" bottom="Transpose"></s1-readout>
        <s1-readout top="120.00" bottom="Tempo"></s1-readout>
        <div class="met" style="padding-left:5px">
          <div class="v"></div>
          <div style="display:flex;align-items:center;gap:3px"><div class="h"></div><span style="width:12px;height:7px;border-radius:4px;background:#4aa6d8"></span></div>
        </div>
      </div>
      <div class="der"><span>Edit</span><span>Mix</span><span style="width:49px">Browse</span></div>`;
  }
}

customElements.define("s1-titlebar", S1Titlebar);
customElements.define("s1-menubar", S1Menubar);
customElements.define("s1-toolbar", S1Toolbar);
customElements.define("s1-clip", S1Clip);
customElements.define("s1-track-head", S1TrackHead);
customElements.define("s1-ruler", S1Ruler);
customElements.define("s1-flag", S1Flag);
customElements.define("s1-arranger", S1Arranger);
customElements.define("s1-readout", S1Readout);
customElements.define("s1-transport", S1Transport);
customElements.define("s1-window", S1Window);
</script>
</body>
</html>
